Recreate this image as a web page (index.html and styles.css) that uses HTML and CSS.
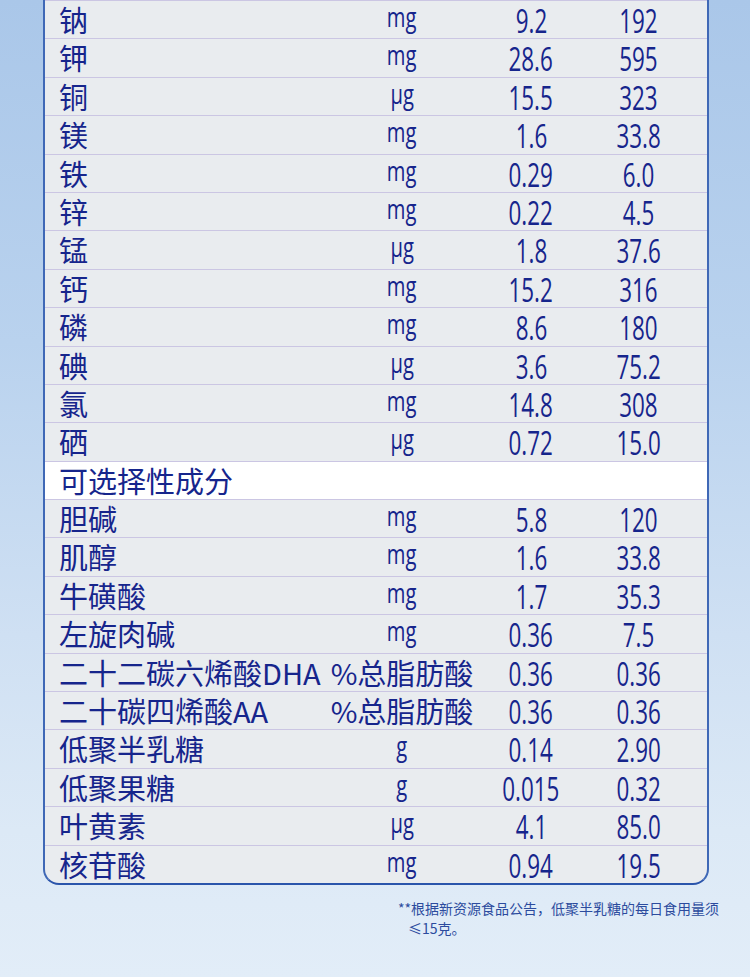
FILE: index.html
```html
<!DOCTYPE html>
<html lang="zh-CN">
<head>
<meta charset="utf-8">
<title>营养成分表</title>
<link rel="stylesheet" href="styles.css">
</head>
<body>
<div class="page">
  <div class="panel">
    <div class="row"><span class="name">钠</span><span class="unit"><span class="sq">mg</span></span><span class="val"><span class="sq">9.2</span></span><span class="val v2"><span class="sq">192</span></span></div>
    <div class="row"><span class="name">钾</span><span class="unit"><span class="sq">mg</span></span><span class="val"><span class="sq">28.6</span></span><span class="val v2"><span class="sq">595</span></span></div>
    <div class="row"><span class="name">铜</span><span class="unit"><span class="sq">μg</span></span><span class="val"><span class="sq">15.5</span></span><span class="val v2"><span class="sq">323</span></span></div>
    <div class="row"><span class="name">镁</span><span class="unit"><span class="sq">mg</span></span><span class="val"><span class="sq">1.6</span></span><span class="val v2"><span class="sq">33.8</span></span></div>
    <div class="row"><span class="name">铁</span><span class="unit"><span class="sq">mg</span></span><span class="val"><span class="sq">0.29</span></span><span class="val v2"><span class="sq">6.0</span></span></div>
    <div class="row"><span class="name">锌</span><span class="unit"><span class="sq">mg</span></span><span class="val"><span class="sq">0.22</span></span><span class="val v2"><span class="sq">4.5</span></span></div>
    <div class="row"><span class="name">锰</span><span class="unit"><span class="sq">μg</span></span><span class="val"><span class="sq">1.8</span></span><span class="val v2"><span class="sq">37.6</span></span></div>
    <div class="row"><span class="name">钙</span><span class="unit"><span class="sq">mg</span></span><span class="val"><span class="sq">15.2</span></span><span class="val v2"><span class="sq">316</span></span></div>
    <div class="row"><span class="name">磷</span><span class="unit"><span class="sq">mg</span></span><span class="val"><span class="sq">8.6</span></span><span class="val v2"><span class="sq">180</span></span></div>
    <div class="row"><span class="name">碘</span><span class="unit"><span class="sq">μg</span></span><span class="val"><span class="sq">3.6</span></span><span class="val v2"><span class="sq">75.2</span></span></div>
    <div class="row"><span class="name">氯</span><span class="unit"><span class="sq">mg</span></span><span class="val"><span class="sq">14.8</span></span><span class="val v2"><span class="sq">308</span></span></div>
    <div class="row"><span class="name">硒</span><span class="unit"><span class="sq">μg</span></span><span class="val"><span class="sq">0.72</span></span><span class="val v2"><span class="sq">15.0</span></span></div>
    <div class="row section"><span class="name">可选择性成分</span></div>
    <div class="row"><span class="name">胆碱</span><span class="unit"><span class="sq">mg</span></span><span class="val"><span class="sq">5.8</span></span><span class="val v2"><span class="sq">120</span></span></div>
    <div class="row"><span class="name">肌醇</span><span class="unit"><span class="sq">mg</span></span><span class="val"><span class="sq">1.6</span></span><span class="val v2"><span class="sq">33.8</span></span></div>
    <div class="row"><span class="name">牛磺酸</span><span class="unit"><span class="sq">mg</span></span><span class="val"><span class="sq">1.7</span></span><span class="val v2"><span class="sq">35.3</span></span></div>
    <div class="row"><span class="name">左旋肉碱</span><span class="unit"><span class="sq">mg</span></span><span class="val"><span class="sq">0.36</span></span><span class="val v2"><span class="sq">7.5</span></span></div>
    <div class="row"><span class="name">二十二碳六烯酸DHA</span><span class="unit cjk">%总脂肪酸</span><span class="val"><span class="sq">0.36</span></span><span class="val v2"><span class="sq">0.36</span></span></div>
    <div class="row"><span class="name">二十碳四烯酸AA</span><span class="unit cjk">%总脂肪酸</span><span class="val"><span class="sq">0.36</span></span><span class="val v2"><span class="sq">0.36</span></span></div>
    <div class="row"><span class="name">低聚半乳糖</span><span class="unit"><span class="sq">g</span></span><span class="val"><span class="sq">0.14</span></span><span class="val v2"><span class="sq">2.90</span></span></div>
    <div class="row"><span class="name">低聚果糖</span><span class="unit"><span class="sq">g</span></span><span class="val"><span class="sq">0.015</span></span><span class="val v2"><span class="sq">0.32</span></span></div>
    <div class="row"><span class="name">叶黄素</span><span class="unit"><span class="sq">μg</span></span><span class="val"><span class="sq">4.1</span></span><span class="val v2"><span class="sq">85.0</span></span></div>
    <div class="row last"><span class="name">核苷酸</span><span class="unit"><span class="sq">mg</span></span><span class="val"><span class="sq">0.94</span></span><span class="val v2"><span class="sq">19.5</span></span></div>
  </div>
  <p class="note">**根据新资源食品公告，低聚半乳糖的每日食用量须≤15克。</p>
</div>
</body>
</html>
```
FILE: styles.css
```css
html, body {
  margin: 0;
  padding: 0;
}
body {
  width: 750px;
  height: 977px;
  overflow: hidden;
  background: linear-gradient(to bottom, #aac7e9 0%, #b9d2ee 35%, #cfe0f3 65%, #dce9f6 85%, #e2edf8 100%);
  font-family: "Noto Sans CJK SC", "Noto Sans", sans-serif;
  color: #16258c;
}
.page {
  display: flex;
  flex-direction: column;
}
.panel {
  margin-left: 43px;
  width: 666px;
  box-sizing: border-box;
  background: #e9ecef;
  border-left: 2px solid #3f68b6;
  border-right: 2px solid #3f68b6;
  border-bottom: 2px solid #2b55ab;
  border-radius: 0 0 16px 16px;
  overflow: hidden;
}
.row {
  display: flex;
  align-items: flex-start;
  height: 38.4px;
  box-sizing: border-box;
  border-top: 1px solid #cbc6e3;
}
.row.section {
  background: #ffffff;
}
.name {
  width: 285px;
  flex: none;
  box-sizing: border-box;
  padding-left: 14px;
  font-size: 29px;
  line-height: 37px;
  white-space: nowrap;
  font-family: "Noto Sans CJK SC", sans-serif;
}
.unit {
  width: 144px;
  flex: none;
  text-align: center;
  font-family: "Open Sans", sans-serif;
  font-size: 28px;
  font-weight: 500;
  line-height: 31px;
  white-space: nowrap;
}
.unit.cjk {
  font-family: "Noto Sans CJK SC", sans-serif;
  font-size: 29px;
  font-weight: 400;
  line-height: 37px;
}
.val {
  width: 114px;
  flex: none;
  text-align: center;
  font-family: "Open Sans", sans-serif;
  font-size: 32px;
  font-weight: 500;
  line-height: 34px;
  padding-top: 3px;
  white-space: nowrap;
}
.val.v2 {
  width: 101px;
}
.sq {
  display: inline-block;
  transform: scaleX(0.7);
  transform-origin: center;
}
.unit .sq {
  transform: scaleX(0.72);
}
.note {
  margin: 13px 0 0 0;
  padding-left: 408px;
  width: 314px;
  text-indent: -10px;
  font-size: 14px;
  line-height: 20px;
  color: #2c4b9e;
}
```
